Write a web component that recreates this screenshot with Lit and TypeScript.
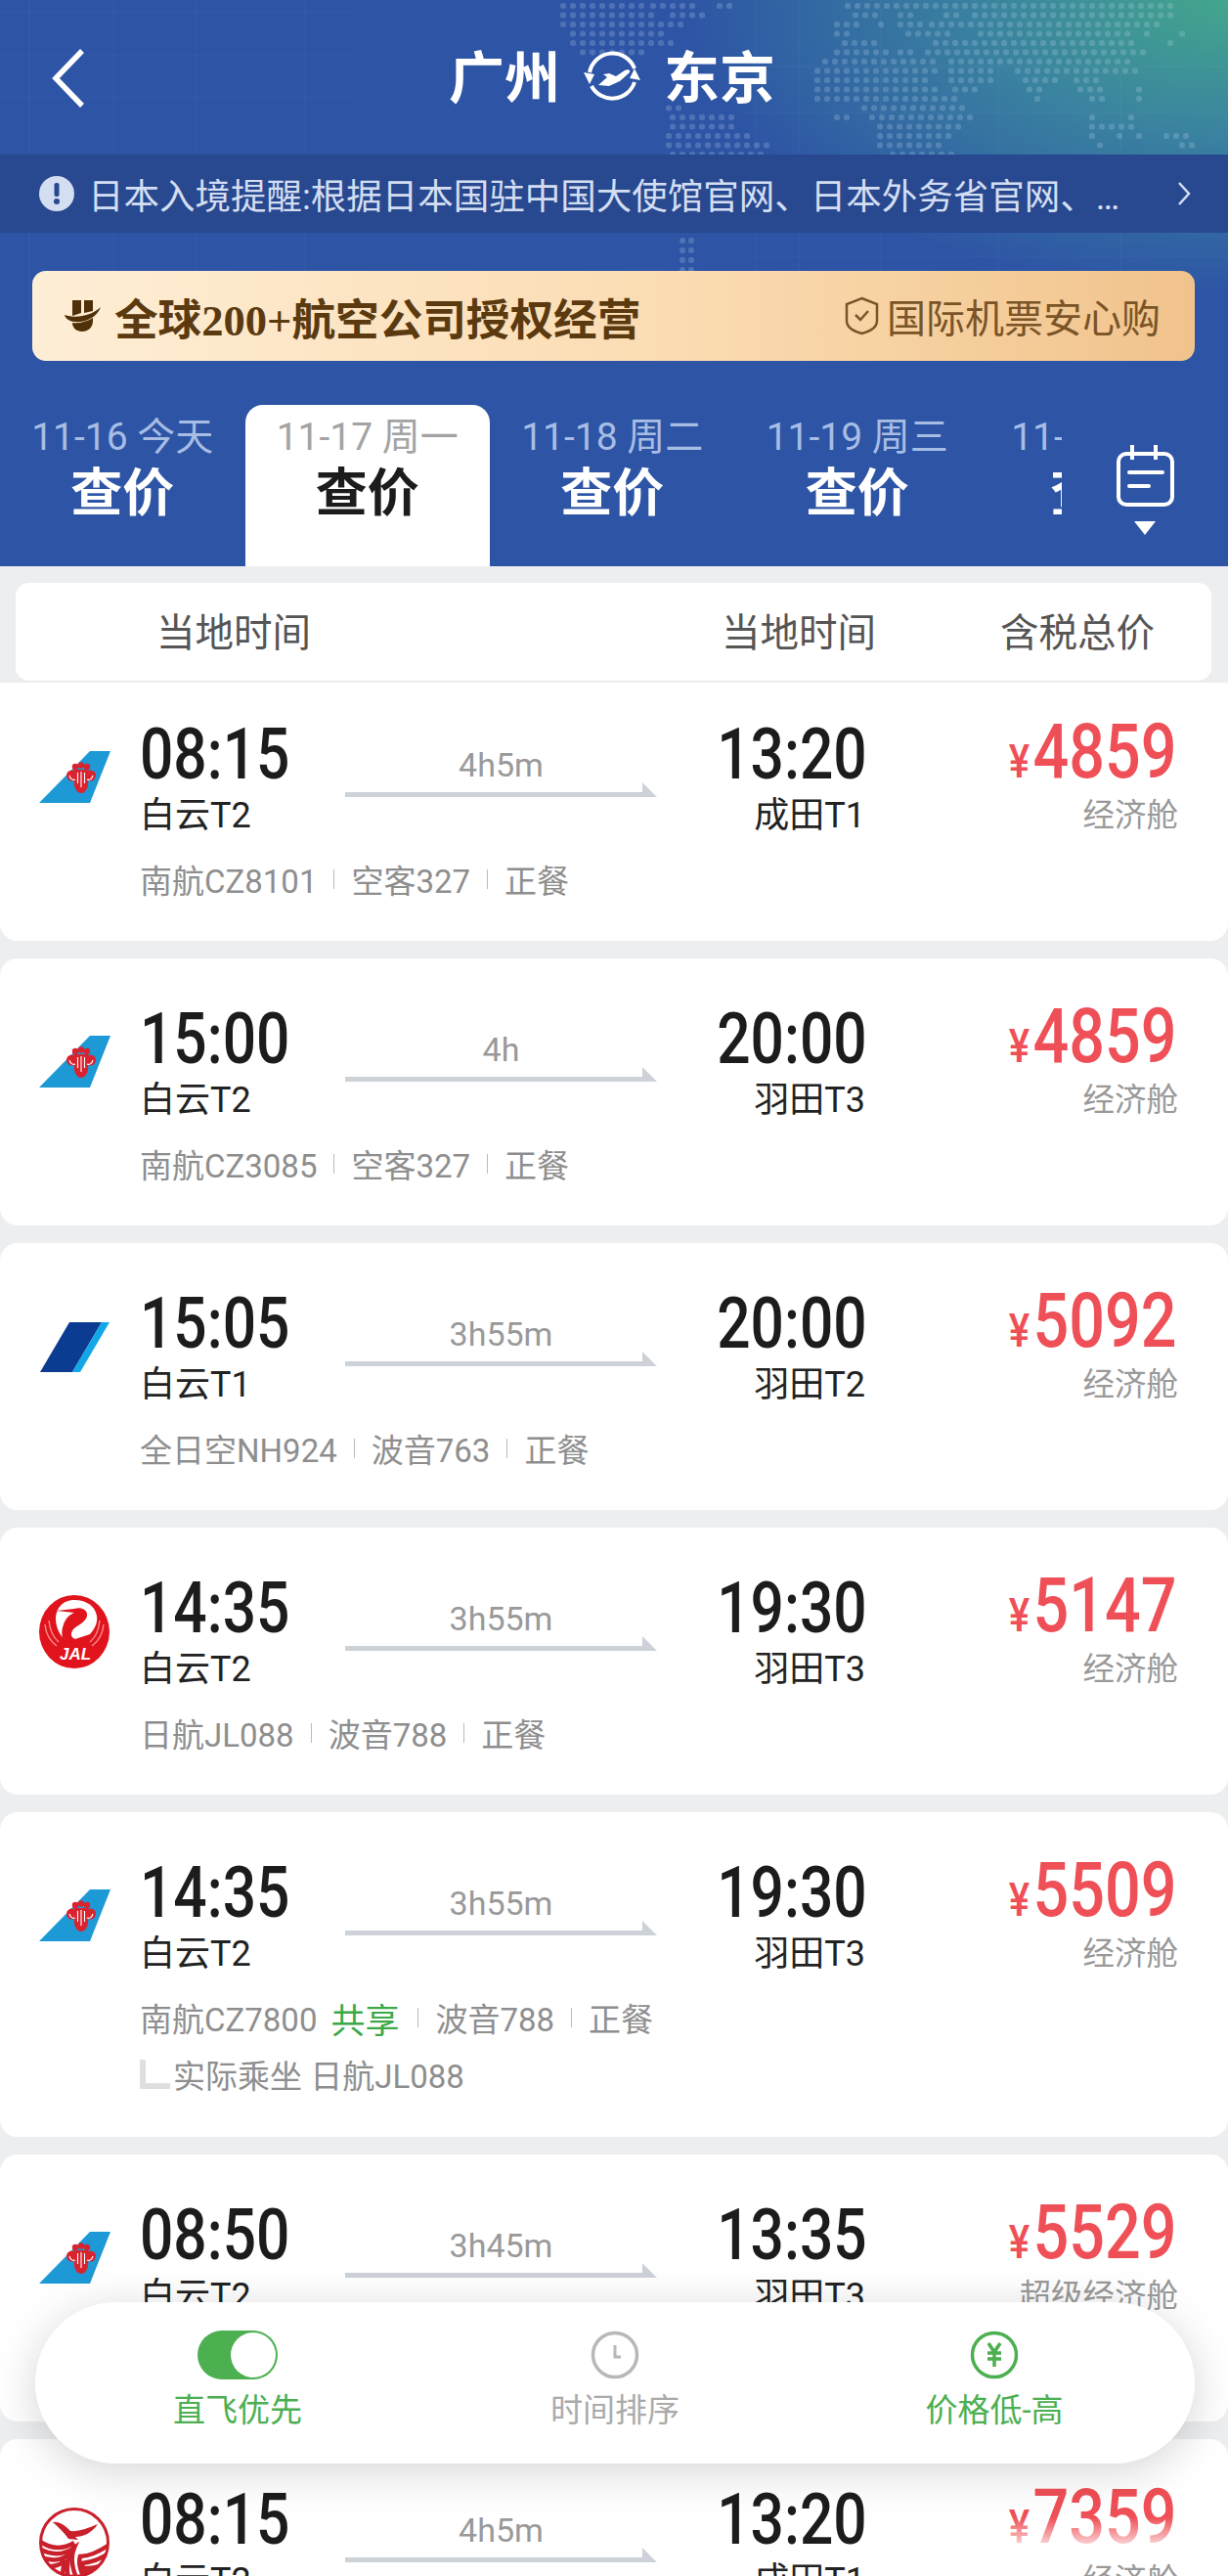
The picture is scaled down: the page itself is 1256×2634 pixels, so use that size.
import { LitElement, html, css, svg } from 'lit';
import { customElement } from 'lit/decorators.js';

const CSA_LOGO = html`<svg class="csa" viewBox="0 0 74 54" width="74" height="54">
  <path d="M52 0H73L52 53H0Z" fill="#1d9ad6"/>
  <g fill="#d9232e">
    <circle cx="37" cy="16" r="3.200"/><circle cx="43" cy="14.500" r="3.200"/><circle cx="49" cy="16" r="3.200"/>
    <circle cx="33.500" cy="25" r="5.500"/><circle cx="52.500" cy="25" r="5.500"/>
    <path d="M36 19H50L53 27L50 30C51 36 48 43 43 43S35 36 36 30L33 27Z"/>
  </g>
  <path d="M43 21V37M39.500 22V33M46.500 22V33M31 25C32 29 35 30 37 29M55 25C54 29 51 30 49 29" stroke="#fff" stroke-width="1.100" fill="none"/>
</svg>`;

const ANA_LOGO = html`<svg class="ana" viewBox="0 0 74 52" width="74" height="52">
  <path d="M31 0H64L34 51H1Z" fill="#0c3b92"/>
  <path d="M64 0H72L42 51H34Z" fill="#12a7e6"/>
</svg>`;

const JAL_LOGO = html`<svg class="jal" viewBox="0 0 72 75" width="72" height="75">
  <ellipse cx="36" cy="37.500" rx="36" ry="37.500" fill="#e1131d"/>
  <path d="M36 5C23 5 17 15 17 24C17 33 21 41 28 48L52 40C58 33 60 27 59 21C57 11 48 5 36 5Z" fill="#fff"/>
  <path d="M18 16L36 14C45 11 52 17 48 24C44 31 34 32 33 39C32 44 38 47 44 44L34 58C24 50 21 40 25 30C27 24 31 20 36 18Z" fill="#e1131d"/>
  <path d="M6 30C7 40 11 47 18 52M10 26C11 36 14 43 20 48M66 30C65 40 61 47 54 52M62 26C61 36 58 43 52 48" stroke="#f58a8a" stroke-width="1.500" fill="none"/>
  <text x="37" y="66" text-anchor="middle" class="jal-text">JAL</text>
</svg>`;

const SC_LOGO = html`<svg class="sc" viewBox="0 0 72 72" width="72" height="72">
  <defs><clipPath id="sc-clip"><circle cx="36" cy="36" r="35"/></clipPath></defs>
  <circle cx="36" cy="36" r="34.500" fill="#fff" stroke="#c9202c" stroke-width="3"/>
  <path d="M14 15C21 14 27 19 32 24C40 25 50 21 60 17C54 26 45 30 37 30L40 33L30 32C26 26 20 20 14 15Z" fill="#c9202c"/>
  <g clip-path="url(#sc-clip)" fill="none" stroke="#c9202c" stroke-width="4.500">
    <path d="M0 34C14 44 26 42 36 36M0 42C14 50 26 48 36 41C32 50 34 62 38 72"/>
    <path d="M0 50C12 56 24 54 32 47C28 56 28 64 30 72M2 58C10 62 20 60 27 54C24 60 24 66 24 72"/>
    <path d="M72 38C60 46 50 50 42 50C40 56 42 64 46 72M72 46C62 54 52 56 44 57C44 62 48 68 52 72M72 54C64 60 56 62 50 62C52 66 56 70 60 72"/>
  </g>
</svg>`;

interface Flight {
  logo: unknown; dep: string; depPort: string; dur: string; arr: string; arrPort: string;
  price: string; cabin: string; no: string; plane: string; shared?: boolean; actual?: string;
}

const FLIGHTS: Flight[] = [
  { logo: CSA_LOGO, dep: '08:15', depPort: '白云T2', dur: '4h5m', arr: '13:20', arrPort: '成田T1', price: '4859', cabin: '经济舱', no: '南航CZ8101', plane: '空客327' },
  { logo: CSA_LOGO, dep: '15:00', depPort: '白云T2', dur: '4h', arr: '20:00', arrPort: '羽田T3', price: '4859', cabin: '经济舱', no: '南航CZ3085', plane: '空客327' },
  { logo: ANA_LOGO, dep: '15:05', depPort: '白云T1', dur: '3h55m', arr: '20:00', arrPort: '羽田T2', price: '5092', cabin: '经济舱', no: '全日空NH924', plane: '波音763' },
  { logo: JAL_LOGO, dep: '14:35', depPort: '白云T2', dur: '3h55m', arr: '19:30', arrPort: '羽田T3', price: '5147', cabin: '经济舱', no: '日航JL088', plane: '波音788' },
  { logo: CSA_LOGO, dep: '14:35', depPort: '白云T2', dur: '3h55m', arr: '19:30', arrPort: '羽田T3', price: '5509', cabin: '经济舱', no: '南航CZ7800', plane: '波音788', shared: true, actual: '实际乘坐 日航JL088' },
  { logo: CSA_LOGO, dep: '08:50', depPort: '白云T2', dur: '3h45m', arr: '13:35', arrPort: '羽田T3', price: '5529', cabin: '超级经济舱', no: '南航CZ8101', plane: '空客327' },
  { logo: SC_LOGO, dep: '08:15', depPort: '白云T2', dur: '4h5m', arr: '13:20', arrPort: '成田T1', price: '7359', cabin: '经济舱', no: '深航ZH9101', plane: '空客327' },
];

const TABS = [
  { date: '11-16 今天' }, { date: '11-17 周一', active: true }, { date: '11-18 周二' }, { date: '11-19 周三' }, { date: '11-20 周四' },
];

// dotted world map behind the header: each row is x-start, x-end pairs, measured off the reference
const MAP_ROWS: number[][] = [
  [573, 653, 665, 705, 733, 745, 864, 1202],
  [573, 665, 685, 717, 872, 894, 918, 937, 965, 982, 994, 1194],
  [573, 701, 853, 877, 898, 898, 918, 942, 950, 1182],
  [583, 681, 853, 869, 926, 970, 1000, 1154, 1170, 1170, 1206, 1206],
  [583, 689, 861, 897, 954, 1154, 1194, 1194],
  [593, 653, 853, 905, 918, 934, 946, 1166],
  [841, 958, 970, 1158],
  [833, 954, 970, 1018, 1038, 1162],
  [833, 946, 970, 1018, 1046, 1078, 1098, 1126],
  [833, 962, 974, 998, 1050, 1066, 1102, 1130, 1162, 1162],
  [833, 978, 1058, 1058, 1114, 1126, 1162, 1162],
  [681, 697, 881, 990],
  [685, 745, 853, 865, 889, 990, 1114, 1114, 1154, 1154],
  [685, 745, 897, 978, 1114, 1162],
  [681, 765, 897, 970, 1114, 1114, 1142, 1142, 1162, 1162, 1190, 1210],
  [681, 785, 897, 962, 1122, 1122, 1206, 1218],
  [685, 781, 910, 970],
];

function mapDots() {
  const out: unknown[] = [];
  MAP_ROWS.forEach((row, r) => {
    const y = 3 + r * 9.5;
    for (let s = 0; s < row.length; s += 2) {
      for (let x = row[s]; x <= row[s + 1]; x += 10) {
        out.push(svg`<rect x=${x} y=${y} width="6" height="6" rx="2.5"/>`);
      }
    }
  });
  // short strip that continues below the notice bar
  for (let y = 243; y < 277; y += 10) {
    out.push(svg`<rect x="695" y=${y} width="6" height="6" rx="2.5"/><rect x="704" y=${y} width="6" height="6" rx="2.5"/>`);
  }
  return out;
}

@customElement('app-root')
export class AppRoot extends LitElement {
  static styles = css`
    :host {
      display: block;
      width: 1256px;
      height: 2634px;
      overflow: hidden;
      position: relative;
      background: #eceef0;
      font-family: Roboto, "Noto Sans CJK SC", sans-serif;
    }
    .head {
      height: 579px;
      position: relative;
      overflow: hidden;
      background:
        radial-gradient(ellipse 560px 300px at 100% 0, #43a68c 0%, #3a83a0 45%, rgba(45, 84, 165, 0) 100%),
        #2d54a5;
    }
    .map {
      position: absolute;
      left: 0;
      top: 0;
      fill: rgba(190, 215, 235, 0.24);
    }
    .map line { stroke: rgba(255, 255, 255, 0.05); stroke-width: 1; }
    .nav {
      position: relative;
      height: 158px;
      box-sizing: border-box;
      padding-bottom: 2px;
      display: flex;
      align-items: center;
      justify-content: center;
      color: #fff;
      font-size: 57px;
      font-weight: 700;
      gap: 24px;
    }
    .nav span { margin-top: -6px; }
    .nav span:first-of-type { margin-left: -4px; }
    .back { position: absolute; left: 52px; top: 49px; }
    .notice {
      position: relative;
      height: 80px;
      background: #28488f;
      display: flex;
      align-items: center;
      padding: 0 38px 0 40px;
      color: #d3def2;
      font-size: 36.500px;
      gap: 14px;
      white-space: nowrap;
    }
    .notice .msg { flex: 1; overflow: hidden; }
    .gold {
      position: relative;
      margin: 39px 34px 0 33px;
      height: 92px;
      border-radius: 14px;
      background: linear-gradient(90deg, #feeed6 0%, #fbdcb2 55%, #f1c38c 100%);
      display: flex;
      align-items: center;
      padding: 0 35px 0 33px;
      color: #5b3a10;
      white-space: nowrap;
    }
    .gold .t1 { font-family: "Liberation Serif", "Noto Sans CJK SC", serif; font-weight: 700; font-size: 44.600px; margin-left: 14px; flex: 1; }
    .gold .t2 { font-size: 40px; margin-left: 7px; color: #7a5426; }
    .tabs {
      position: absolute;
      left: 0;
      top: 414px;
      width: 1086px;
      height: 165px;
      display: flex;
      overflow: hidden;
    }
    .tab {
      flex: 0 0 250.5px;
      box-sizing: border-box;
      text-align: center;
      color: #fff;
      border-radius: 18px 18px 0 0;
      white-space: nowrap;
    }
    .tab.active { background: #fff; color: #1c1c1c; }
    .tab .d { font-size: 39px; line-height: 40px; padding-top: 13px; color: #a7bde4; }
    .tab.active .d { color: #a3a3a3; }
    .tab .p { font-size: 53px; font-weight: 700; line-height: 60px; margin-top: 8px; }
    .cal { position: absolute; left: 1139px; top: 455px; }
    .thead {
      margin: 17px 17px 0 16px;
      height: 101px;
      background: #fff;
      border-radius: 14px;
      display: grid;
      grid-template-columns: 144px 578px 285px 1fr;
      align-items: center;
      color: #555;
      font-size: 39.500px;
      padding-bottom: 6px;
      border-bottom: 1px solid #e6e8ea;
      box-sizing: border-box;
    }
    .thead span:first-child { grid-column: 2; }
    .list { display: flex; flex-direction: column; gap: 18px; }
    .card {
      background: #fff;
      border-radius: 18px;
      height: 273px;
      display: grid;
      grid-template-columns: 143px 210px 319px 215px 1fr;
      grid-template-rows: 68px 56px 74px 42px;
      align-content: start;
      box-sizing: border-box;
      padding-top: 49px;
    }
    .card.first { height: 264px; border-radius: 0 0 18px 18px; margin-top: 1px; padding-top: 40px; }
    .card.tall { height: 332px; }
    .logo { grid-row: 1 / 3; padding-left: 40px; }
    .csa { margin-top: 30px; }
    .ana { margin-top: 32px; }
    .jal { margin-top: 20px; }
    .sc { margin-top: 21px; }
    .time { font-size: 72px; font-weight: 500; color: #1c1c1c; line-height: 68px; white-space: nowrap; }
    .time span, .price span { display: inline-block; transform: scaleX(0.84); transform-origin: 0 50%; }
    .time.arr { justify-self: end; text-align: right; }
    .time.arr span, .price span { transform-origin: 100% 50%; }
    .port { font-size: 36px; line-height: 56px; color: #222; white-space: nowrap; }
    .port.arr { justify-self: end; margin-right: 2px; }
    .dur { grid-column: 3; grid-row: 1 / 3; display: flex; flex-direction: column; align-items: center; padding-top: 26px; line-height: 36px; color: #999; font-size: 34px; }
    .line { display: block; }
    .price { color: #ef4f56; text-align: right; padding-right: 52px; font-size: 77px; font-weight: 500; line-height: 68px; margin-top: -3px; white-space: nowrap; }
    .price i { font-style: normal; font-size: 48px; margin-right: 4px; }
    .cabin { text-align: right; padding-right: 51px; font-size: 32.500px; line-height: 56px; color: #999; white-space: nowrap; }
    .meta { grid-column: 2 / 6; display: flex; align-items: center; color: #8e8e8e; font-size: 33px; white-space: nowrap; }
    .meta .sep { width: 1px; height: 20px; background: #bbb; margin: 0 17px; }
    .meta b { color: #3ba947; font-weight: 400; font-size: 35px; margin: 0 2px 0 14px; }
    .actual { grid-column: 2 / 6; display: flex; align-items: center; gap: 3px; color: #8e8e8e; font-size: 33px; white-space: nowrap; }
    .bar {
      position: absolute;
      left: 36px;
      top: 2354px;
      width: 1186px;
      height: 165px;
      box-sizing: border-box;
      padding-left: 14px;
      background: #fff;
      border-radius: 83px;
      box-shadow: 0 8px 46px rgba(0, 0, 0, 0.17);
      display: grid;
      grid-template-columns: 386px 386px 390px;
    }
    .opt { display: flex; flex-direction: column; align-items: center; padding-top: 29px; font-size: 33px; line-height: 44px; color: #4caf50; }
    .opt.off { color: #aaa; }
    .opt svg { display: block; height: 50px; margin-bottom: 10px; }
    .jal-text { font: italic 700 17px "Liberation Sans", sans-serif; fill: #fff; }
    .fade {
      position: absolute;
      left: 930px;
      top: 2574px;
      width: 326px;
      height: 44px;
      background: linear-gradient(180deg, rgba(255, 255, 255, 0), #fff 85%);
    }
  `;

  private renderCard(f: Flight, i: number) {
    const cls = `card ${i === 0 ? 'first' : ''} ${f.actual ? 'tall' : ''}`;
    return html`
      <div class=${cls}>
        <div class="logo">${f.logo}</div>
        <div class="time"><span>${f.dep}</span></div>
        <div class="dur">${f.dur}
          <svg class="line" width="319" height="15" viewBox="0 0 319 15"><path d="M0 10H304V0L319 15H0Z" fill="#ccd2d8"/></svg>
        </div>
        <div class="time arr"><span>${f.arr}</span></div>
        <div class="price"><span><i>¥</i>${f.price}</span></div>
        <div class="port" style="grid-column:2">${f.depPort}</div>
        <div class="port arr" style="grid-column:4">${f.arrPort}</div>
        <div class="cabin" style="grid-column:5">${f.cabin}</div>
        <div class="meta">
          ${f.no}${f.shared ? html`<b>共享</b>` : ''}<span class="sep"></span>${f.plane}<span class="sep"></span>正餐
        </div>
        ${f.actual ? html`<div class="actual">
          <svg width="31" height="30" viewBox="0 0 31 30"><path d="M3 0V27H31" fill="none" stroke="#dfdfdf" stroke-width="6"/></svg>
          ${f.actual}</div>` : ''}
      </div>`;
  }

  render() {
    return html`
      <div class="head">
        <svg class="map" width="1256" height="579">
          ${[30, 116, 200, 312, 773, 817, 901, 1021, 1146].map(x => svg`<line x1=${x} y1="0" x2=${x} y2="330"/>`)}
          <line x1="0" y1="12" x2="360" y2="12"/><line x1="0" y1="57" x2="360" y2="57"/><line x1="0" y1="100" x2="360" y2="100"/>
          <line x1="760" y1="68" x2="1256" y2="68"/><line x1="760" y1="115" x2="1256" y2="115"/><line x1="770" y1="262" x2="1256" y2="262"/>
          ${mapDots()}
        </svg>
        <div class="nav">
          <svg class="back" width="36" height="62" viewBox="0 0 36 62"><path d="M32 3L5 31L32 59" fill="none" stroke="#fff" stroke-width="5.500"/></svg>
          <span>广州</span>
          <svg width="58" height="56" viewBox="0 0 58 56">
            <path d="M6 24A24 24 0 0 1 52 20M52 34A24 24 0 0 1 8 38" fill="none" stroke="#fff" stroke-width="4"/>
            <path d="M0 24L11 26L6 36ZM58 32L47 30L52 20Z" fill="#fff"/>
            <path d="M15 37L24 29L20 26L26 25L33 28L42 22C46 20 49 22 46 25L37 33L26 38Z" fill="#fff"/>
          </svg>
          <span>东京</span>
        </div>
        <div class="notice">
          <svg width="36" height="36" viewBox="0 0 36 36"><circle cx="18" cy="18" r="18" fill="#d3def2"/><rect x="15.500" y="7" width="5" height="14" rx="2" fill="#28488f"/><circle cx="18" cy="26" r="3" fill="#28488f"/></svg>
          <span class="msg">日本入境提醒:根据日本国驻中国大使馆官网、日本外务省官网、…</span>
          <svg width="14" height="26" viewBox="0 0 14 26"><path d="M2 2L12 13L2 24" fill="none" stroke="#d3def2" stroke-width="2.500"/></svg>
        </div>
        <div class="gold">
          <svg width="37" height="32" viewBox="0 0 74 64" fill="#4f3008">
            <path d="M16 0H34V26L16 32ZM40 0H58V22L40 26Z"/>
            <path d="M0 30C24 38 54 32 74 14C66 36 42 46 20 44C10 43 2 38 0 30Z"/>
            <path d="M16 46C28 48 46 44 58 36V42C58 56 48 64 36 64C24 64 16 56 16 46Z"/>
          </svg>
          <span class="t1">全球200+航空公司授权经营</span>
          <svg width="37" height="40" viewBox="0 0 37 40"><path d="M18.500 2L34 8V25C34 32 26 36 18.500 38C11 36 3 32 3 25V8Z" fill="none" stroke="#7a5426" stroke-width="2.500"/><path d="M12 19L17 24L25 15" fill="none" stroke="#7a5426" stroke-width="2.500"/></svg>
          <span class="t2">国际机票安心购</span>
        </div>
        <div class="tabs">
          ${TABS.map(t => html`<div class="tab ${t.active ? 'active' : ''}"><div class="d">${t.date}</div><div class="p">查价</div></div>`)}
        </div>
        <svg class="cal" width="64" height="94" viewBox="0 0 64 94">
          <rect x="5" y="9" width="55" height="52" rx="8" fill="none" stroke="#fff" stroke-width="4"/>
          <path d="M19 0V15M43 0V15" stroke="#fff" stroke-width="4"/>
          <path d="M16 28H50M16 42H36" stroke="#fff" stroke-width="4" stroke-linecap="round"/>
          <path d="M21 78H43L32 92Z" fill="#fff"/>
        </svg>
      </div>
      <div class="thead"><span>当地时间</span><span>当地时间</span><span>含税总价</span></div>
      <div class="list">${FLIGHTS.map((f, i) => this.renderCard(f, i))}</div>
      <div class="fade"></div>
      <div class="bar">
        <div class="opt">
          <svg width="82" height="50" viewBox="0 0 82 50"><rect width="82" height="50" rx="25" fill="#4caf50"/><circle cx="57" cy="25" r="23" fill="#fff"/></svg>
          直飞优先
        </div>
        <div class="opt off">
          <svg width="50" height="50" viewBox="0 0 50 50"><circle cx="25" cy="25" r="22.500" fill="none" stroke="#b8b8b8" stroke-width="3.500"/><path d="M25 15V27H31" fill="none" stroke="#b8b8b8" stroke-width="3"/></svg>
          时间排序
        </div>
        <div class="opt">
          <svg width="50" height="50" viewBox="0 0 50 50"><circle cx="25" cy="25" r="22.500" fill="none" stroke="#4caf50" stroke-width="3.500"/><path d="M19 13L25 22L31 13M25 22V37M18 23H32M18 29H32" fill="none" stroke="#4caf50" stroke-width="3.500"/></svg>
          价格低-高
        </div>
      </div>
    `;
  }
}
